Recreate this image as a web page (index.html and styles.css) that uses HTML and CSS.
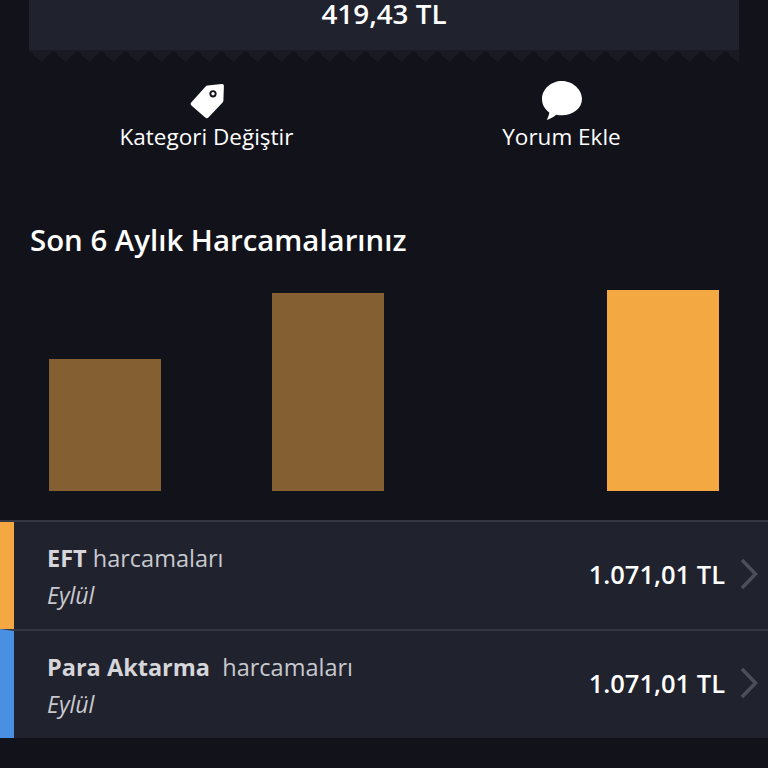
FILE: index.html
```html
<!DOCTYPE html>
<html lang="tr">
<head>
    <meta charset="UTF-8">
    <title>Harcama Detayı</title>
    <link rel="stylesheet" href="styles.css">
</head>
<body>
    <div class="receipt">
        <div class="receipt-amount">419,43 TL</div>
    </div>
    <div class="receipt-edge"></div>

    <div class="actions">
        <a class="action" href="#">
            <svg class="action-icon" width="36" height="36" viewBox="0 0 36 36">
                <path fill="#fff" fill-rule="evenodd" d="M2.200 19.600 16.600 3.600c.6-.6 1.200-.9 2-1L32.500 1c1.200-.1 2.400.6 2.400 1.700l-.5 14.700c0 .8-.3 1.400-.8 2L19.400 34.500c-.8.9-2 1-2.900.2L2.400 22.500c-.9-.8-1-2-.2-2.900ZM24 7.200a3.600 3.600 0 1 0 0 7.200 3.600 3.600 0 0 0 0-7.200Zm0 1.900a1.700 1.700 0 1 1 0 3.400 1.700 1.700 0 0 1 0-3.400Z"/>
            </svg>
            <span>Kategori Değiştir</span>
        </a>
        <a class="action" href="#">
            <svg class="action-icon" width="40" height="40" viewBox="0 0 40 40">
                <path fill="#fff" d="M20 0C9 0 0 8.200 0 18c0 5.600 2.900 10.400 7.300 13.400-.3 2.500-1.300 5-2.600 7.600 3.600-1.200 6.900-3 9.400-5.300 1.800.4 3.900.6 5.900.6 11 0 20-7.200 20-16.300S31 0 20 0Z"/>
            </svg>
            <span>Yorum Ekle</span>
        </a>
    </div>

    <h2 class="chart-title">Son 6 Aylık Harcamalarınız</h2>

    <div class="chart">
        <div class="slot"><div class="bar" style="height: 132px"></div></div>
        <div class="slot"></div>
        <div class="slot"><div class="bar" style="height: 198px"></div></div>
        <div class="slot"></div>
        <div class="slot"></div>
        <div class="slot"><div class="bar bar-active" style="height: 201px"></div></div>
    </div>

    <div class="list">
        <div class="row row-orange">
            <div class="row-text">
                <div class="row-title"><strong>EFT</strong> harcamaları</div>
                <div class="row-month">Eylül</div>
            </div>
            <div class="row-amount">1.071,01 TL</div>
            <svg class="chevron" width="18" height="32" viewBox="0 0 18 32">
                <path d="M2 2 15.500 16 2 30" fill="none" stroke="#4c4e5c" stroke-width="3.500"/>
            </svg>
        </div>
        <div class="row row-blue">
            <div class="row-text">
                <div class="row-title"><strong>Para Aktarma</strong>&nbsp; harcamaları</div>
                <div class="row-month">Eylül</div>
            </div>
            <div class="row-amount">1.071,01 TL</div>
            <svg class="chevron" width="18" height="32" viewBox="0 0 18 32">
                <path d="M2 2 15.500 16 2 30" fill="none" stroke="#4c4e5c" stroke-width="3.500"/>
            </svg>
        </div>
    </div>
</body>
</html>
```

FILE: styles.css
```css
html, body {
    height: 768px;
    overflow: hidden;
}

body {
    font-family: "Open Sans", "Noto Sans", sans-serif;
    background-color: #12121a;
    color: white;
    margin: 0;
    padding: 0;
}

.receipt {
    margin: 0 29px;
    height: 50px;
    background-color: #20222d;
    display: flex;
    justify-content: center;
}

.receipt-amount {
    font-size: 27.800px;
    font-weight: 600;
    line-height: 26px;
}

.receipt-edge {
    margin: 0 29px;
    height: 12px;
    background-image: conic-gradient(from -45deg at 50% 100%, #191a23 90deg, transparent 0);
    background-size: 24px 12px;
    background-repeat: repeat-x;
}

.actions {
    display: grid;
    grid-template-columns: 1fr 1fr;
    margin: 19px 29px 0;
}

.action {
    display: flex;
    flex-direction: column;
    align-items: center;
    color: white;
    text-decoration: none;
    font-size: 22.500px;
    font-weight: 500;
    line-height: 28px;
}

.action-icon {
    height: 40px;
    margin-bottom: 2px;
}

.chart-title {
    font-size: 29.400px;
    font-weight: 600;
    line-height: 36px;
    margin: 71px 0 0 30px;
}

.chart {
    display: flex;
    align-items: flex-end;
    height: 201px;
    margin: 32px 49px 0;
}

.slot {
    flex: 1;
}

.bar {
    background-color: #845f32;
}

.bar-active {
    background-color: #f4a842;
}

.list {
    margin-top: 29px;
    border-top: 2px solid #343641;
}

.row {
    display: flex;
    align-items: center;
    height: 107px;
    padding-left: 33px;
    padding-right: 10px;
    background-color: #20222d;
    border-left: 14px solid;
}

.row + .row {
    border-top: 2px solid #343641;
}

.row-orange {
    border-left-color: #f4a842;
}

.row-blue {
    border-left-color: #4a90e2;
}

.row-text {
    flex: 1;
}

.row-title {
    font-size: 23.500px;
    line-height: 30px;
    color: #c8c9cf;
}

.row-title strong {
    font-weight: 700;
    color: #d6d6da;
}

.row-month {
    font-size: 23px;
    font-style: italic;
    line-height: 28px;
    margin-top: 8px;
    color: #c8c9cf;
}

.row-amount {
    font-size: 25.500px;
    font-weight: 600;
    margin-right: 15px;
    margin-bottom: 3px;
}

.chevron {
    margin-bottom: 3px;
}
```
